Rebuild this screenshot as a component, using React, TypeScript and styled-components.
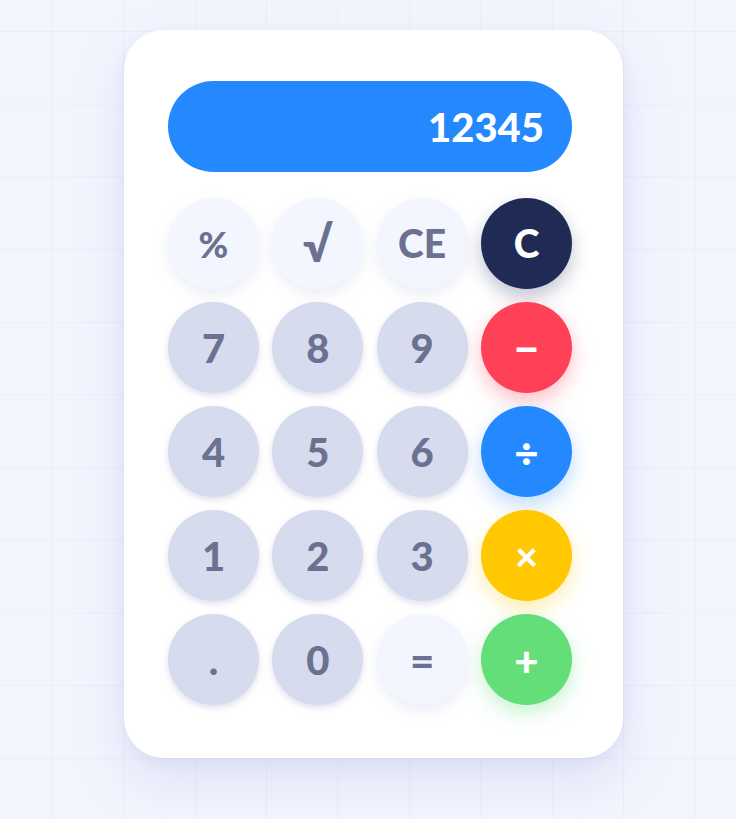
import React from "react";
import styled, { createGlobalStyle } from "styled-components";

const GlobalStyle = createGlobalStyle`
  html, body {
    margin: 0;
    padding: 0;
  }
  body {
    background-color: #f3f5fe;
    background-image:
      linear-gradient(to right, #ebedf9 1px, transparent 1px),
      linear-gradient(to bottom, #ebedf9 1px, transparent 1px);
    background-size: 71.4px 72.7px;
    background-position: 52px 31px;
    font-family: Lato, "Open Sans", sans-serif;
  }
`;

const Page = styled.div`
  min-height: 819px;
  box-sizing: border-box;
  padding: 30px 0 0 124px;
`;

const Card = styled.div`
  width: 499px;
  box-sizing: border-box;
  padding: 51px 51px 53px 44px;
  background: #ffffff;
  border-radius: 40px;
  box-shadow: 0 24px 50px rgba(150, 158, 215, 0.22), 0 4px 14px rgba(150, 158, 215, 0.12);
`;

const Display = styled.div`
  height: 91px;
  box-sizing: border-box;
  border-radius: 46px;
  background: #2489fe;
  display: flex;
  align-items: center;
  justify-content: flex-end;
  padding-right: 28px;
  margin-bottom: 26px;
  color: #ffffff;
  font-family: Lato, sans-serif;
  font-weight: 900;
  font-size: 40px;
`;

const Keys = styled.div`
  display: grid;
  grid-template-columns: repeat(4, 91px);
  grid-auto-rows: 91px;
  gap: 13px;
  justify-content: space-between;
`;

type Variant = "light" | "digit" | "dark" | "red" | "blue" | "yellow" | "green";

const palette: Record<Variant, { bg: string; fg: string; shadow: string }> = {
  light: { bg: "#f3f6fe", fg: "#6b7190", shadow: "0 6px 14px rgba(170, 176, 215, 0.22)" },
  digit: { bg: "#d7dbee", fg: "#6b7190", shadow: "0 3px 6px rgba(160, 166, 205, 0.35)" },
  dark: { bg: "#1f2a55", fg: "#ffffff", shadow: "0 8px 18px rgba(31, 42, 85, 0.28)" },
  red: { bg: "#ff4158", fg: "#ffffff", shadow: "0 8px 20px rgba(255, 65, 88, 0.35)" },
  blue: { bg: "#2489fe", fg: "#ffffff", shadow: "0 8px 20px rgba(36, 137, 254, 0.3)" },
  yellow: { bg: "#ffc800", fg: "#ffffff", shadow: "0 8px 20px rgba(255, 200, 0, 0.32)" },
  green: { bg: "#64de78", fg: "#ffffff", shadow: "0 8px 20px rgba(100, 222, 120, 0.35)" },
};

const Key = styled.button<{ $variant: Variant; $size?: number }>`
  width: 91px;
  height: 91px;
  border: none;
  border-radius: 50%;
  padding: 0;
  display: flex;
  align-items: center;
  justify-content: center;
  background: ${(p) => palette[p.$variant].bg};
  color: ${(p) => palette[p.$variant].fg};
  box-shadow: ${(p) => palette[p.$variant].shadow};
  font-family: Lato, sans-serif;
  font-weight: 900;
  font-size: ${(p) => p.$size ?? 40}px;
  line-height: 1;
  cursor: pointer;
`;

const keys: { label: string; variant: Variant; size?: number }[] = [
  { label: "%", variant: "light", size: 36 },
  { label: "√", variant: "light", size: 48 },
  { label: "CE", variant: "light", size: 39 },
  { label: "C", variant: "dark", size: 39 },
  { label: "7", variant: "digit" },
  { label: "8", variant: "digit" },
  { label: "9", variant: "digit" },
  { label: "−", variant: "red", size: 44 },
  { label: "4", variant: "digit" },
  { label: "5", variant: "digit" },
  { label: "6", variant: "digit" },
  { label: "÷", variant: "blue", size: 42 },
  { label: "1", variant: "digit" },
  { label: "2", variant: "digit" },
  { label: "3", variant: "digit" },
  { label: "×", variant: "yellow", size: 40 },
  { label: ".", variant: "digit" },
  { label: "0", variant: "digit" },
  { label: "=", variant: "light", size: 42 },
  { label: "+", variant: "green", size: 42 },
];

export default function App() {
  return (
    <>
      <GlobalStyle />
      <Page>
        <Card>
          <Display>12345</Display>
          <Keys>
            {keys.map((k) => (
              <Key key={k.label} $variant={k.variant} $size={k.size}>
                {k.label}
              </Key>
            ))}
          </Keys>
        </Card>
      </Page>
    </>
  );
}
